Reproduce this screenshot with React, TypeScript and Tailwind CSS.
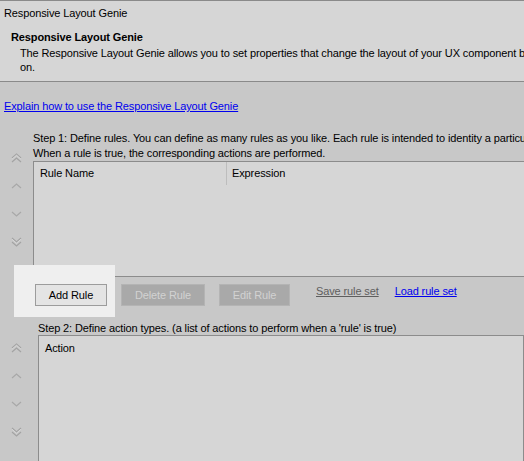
import React from "react";

const DoubleUp = () => (
  <svg width="11" height="10" viewBox="0 0 11 10">
    <path d="M1 5 L5.5 1 L10 5" fill="none" stroke="#a3a3a3" strokeWidth="1.2" />
    <path d="M1 9 L5.5 5 L10 9" fill="none" stroke="#a3a3a3" strokeWidth="1.2" />
    <path d="M1 6.2 L5.5 2.2 L10 6.2" fill="none" stroke="#dcdcdc" strokeWidth="0.8" />
  </svg>
);
const Up = () => (
  <svg width="11" height="6" viewBox="0 0 11 6">
    <path d="M1 5 L5.5 1 L10 5" fill="none" stroke="#a8a8a8" strokeWidth="1.2" />
  </svg>
);
const Down = () => (
  <svg width="11" height="6" viewBox="0 0 11 6">
    <path d="M1 1 L5.5 5 L10 1" fill="none" stroke="#a8a8a8" strokeWidth="1.2" />
  </svg>
);
const DoubleDown = () => (
  <svg width="11" height="10" viewBox="0 0 11 10">
    <path d="M1 1 L5.5 5 L10 1" fill="none" stroke="#a3a3a3" strokeWidth="1.2" />
    <path d="M1 5 L5.5 9 L10 5" fill="none" stroke="#a3a3a3" strokeWidth="1.2" />
    <path d="M1 2.2 L5.5 6.2 L10 2.2" fill="none" stroke="#dcdcdc" strokeWidth="0.8" />
  </svg>
);

const Arrows = () => (
  <div className="flex w-[33px] shrink-0 flex-col items-center pt-[13px]">
    <div className="flex h-[28px] items-center justify-center"><DoubleUp /></div>
    <div className="flex h-[28px] items-center justify-center"><Up /></div>
    <div className="flex h-[28px] items-center justify-center"><Down /></div>
    <div className="flex h-[28px] items-center justify-center"><DoubleDown /></div>
  </div>
);

export default function App() {
  return (
    <div className="relative h-[461px] w-[524px] overflow-hidden whitespace-nowrap bg-[#c8c8c8] font-['Liberation_Sans',Arial,sans-serif] text-[11px] leading-[14px] tracking-[-0.12px] text-black">
      <div className="h-[82px] border-y border-[#8a8a8a] bg-[#d6d6d6]">
        <div className="pl-[4px] pt-[5px]">Responsive Layout Genie</div>
        <div className="pl-[11px] pt-[10px] font-bold">Responsive Layout Genie</div>
        <div className="pl-[20px] pt-[2px]">
          The Responsive Layout Genie allows you to set properties that change the layout of your UX component based on screen size, orientation and so
        </div>
        <div className="pl-[20px]">on.</div>
      </div>

      <div className="pl-[4px] pt-[17px]">
        <span className="text-[#0000ee] underline">Explain how to use the Responsive Layout Genie</span>
      </div>

      <div className="mt-[18px] flex">
        <Arrows />
        <div className="flex w-[520px] flex-col leading-[15px]">
          <div>Step 1: Define rules. You can define as many rules as you like. Each rule is intended to identity a particular screen size.</div>
          <div>When a rule is true, the corresponding actions are performed.</div>
          <div className="h-[116px] border border-[#8c8c8c] bg-[#d6d6d6]">
            <div className="flex h-[23px]">
              <div className="w-[193px] border-r border-[#bdbdbd] pl-[6px] pt-[4px] leading-[14px]">Rule Name</div>
              <div className="pl-[5px] pt-[4px] leading-[14px]">Expression</div>
            </div>
          </div>
        </div>
      </div>

      <div className="absolute left-[14px] top-[265px] h-[52px] w-[101px] bg-[#efefef]" />

      <div className="relative mt-[7px] flex h-[22px] items-start pl-[35px]">
        <div className="flex h-[22px] w-[72px] items-center justify-center border border-[#9c9c9c] bg-[#e4e4e4]">Add Rule</div>
        <div className="ml-[14px] flex h-[22px] w-[84px] items-center justify-center border border-[#b4b4b4] bg-[#a9a9a9] text-[#d2d2d2]">Delete Rule</div>
        <div className="ml-[14px] flex h-[22px] w-[71px] items-center justify-center border border-[#b4b4b4] bg-[#a9a9a9] text-[#d2d2d2]">Edit Rule</div>
        <span className="ml-[26px] text-[#5e5e5e] underline">Save rule set</span>
        <span className="ml-[16px] text-[#0000ee] underline">Load rule set</span>
      </div>

      <div className="mt-[15px] flex">
        <div className="w-[38px] shrink-0">
          <Arrows />
        </div>
        <div className="flex w-[520px] flex-col">
          <div className="leading-[14px]">Step 2: Define action types. (a list of actions to perform when a 'rule' is true)</div>
          <div className="h-[200px] border border-[#8c8c8c] bg-[#d6d6d6]">
            <div className="pl-[6px] pt-[5px]">Action</div>
          </div>
        </div>
      </div>
    </div>
  );
}
